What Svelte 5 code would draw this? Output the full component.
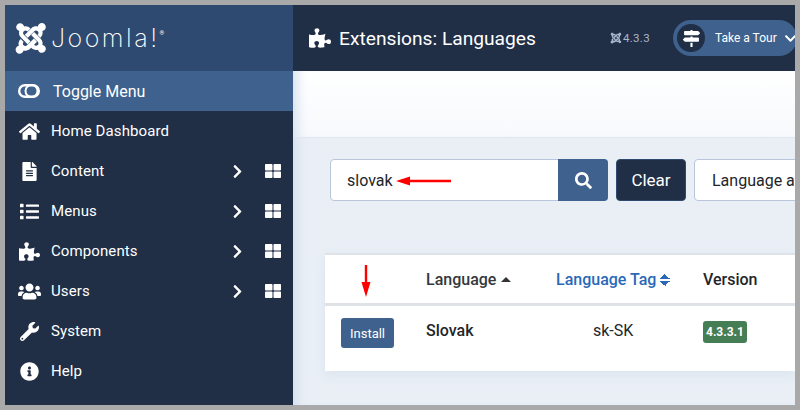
<script>
  const icons = {
    home: ["0 0 576 512", "M280.37 148.26L96 300.11V464a16 16 0 0 0 16 16l112.06-.29a16 16 0 0 0 15.92-16V368a16 16 0 0 1 16-16h64a16 16 0 0 1 16 16v95.64a16 16 0 0 0 16 16.05L464 480a16 16 0 0 0 16-16V300L295.67 148.26a12.19 12.19 0 0 0-15.3 0zM571.6 251.47L488 182.56V44.05a12 12 0 0 0-12-12h-56a12 12 0 0 0-12 12v72.61L318.47 43a48 48 0 0 0-61 0L4.34 251.47a12 12 0 0 0-1.6 16.9l25.5 31A12 12 0 0 0 45.15 301l235.22-193.74a12.19 12.19 0 0 1 15.3 0L530.9 301a12 12 0 0 0 16.9-1.6l25.5-31a12 12 0 0 0-1.7-16.93z"],
    file: ["0 0 384 512", "M224 136V0H24C10.7 0 0 10.7 0 24v464c0 13.3 10.7 24 24 24h336c13.3 0 24-10.7 24-24V160H248c-13.2 0-24-10.8-24-24zm64 236c0 6.6-5.4 12-12 12H108c-6.6 0-12-5.4-12-12v-8c0-6.6 5.4-12 12-12h168c6.6 0 12 5.4 12 12v8zm0-64c0 6.6-5.4 12-12 12H108c-6.6 0-12-5.4-12-12v-8c0-6.6 5.4-12 12-12h168c6.6 0 12 5.4 12 12v8zm0-72v8c0 6.6-5.4 12-12 12H108c-6.6 0-12-5.4-12-12v-8c0-6.6 5.4-12 12-12h168c6.6 0 12 5.4 12 12zm96-114.1v6.1H256V0h6.1c6.4 0 12.5 2.5 17 7l97.9 98c4.5 4.5 7 10.6 7 16.9z"],
    list: ["0 0 512 512", "M80 368H16a16 16 0 0 0-16 16v64a16 16 0 0 0 16 16h64a16 16 0 0 0 16-16v-64a16 16 0 0 0-16-16zm0-320H16A16 16 0 0 0 0 64v64a16 16 0 0 0 16 16h64a16 16 0 0 0 16-16V64a16 16 0 0 0-16-16zm0 160H16a16 16 0 0 0-16 16v64a16 16 0 0 0 16 16h64a16 16 0 0 0 16-16v-64a16 16 0 0 0-16-16zm416 176H176a16 16 0 0 0-16 16v32a16 16 0 0 0 16 16h320a16 16 0 0 0 16-16v-32a16 16 0 0 0-16-16zm0-320H176a16 16 0 0 0-16 16v32a16 16 0 0 0 16 16h320a16 16 0 0 0 16-16V80a16 16 0 0 0-16-16zm0 160H176a16 16 0 0 0-16 16v32a16 16 0 0 0 16 16h320a16 16 0 0 0 16-16v-32a16 16 0 0 0-16-16z"],
    puzzle: ["0 0 576 512", "M519.442 288.651c-41.519 0-59.5 31.593-82.058 31.593C377.409 320.244 432 144 432 144s-196.288 80-196.288-3.297c0-35.827 36.288-46.25 36.288-85.985C272 19.216 243.885 0 210.539 0c-34.654 0-66.366 18.891-66.366 56.346 0 41.364 31.711 59.277 31.711 81.75C175.885 207.719 0 166.758 0 166.758v333.237s178.635 41.047 178.635-28.662c0-22.473-40-40.107-40-81.471 0-37.456 29.25-56.346 63.577-56.346 33.673 0 61.788 19.216 61.788 54.717 0 39.735-36.288 50.158-36.288 85.985 0 60.803 129.675 25.73 181.23 25.73 0 0-34.725-120.101 25.827-120.101 35.962 0 46.423 36.152 86.308 36.152C556.712 416 576 387.99 576 354.443c0-34.199-18.962-65.792-56.558-65.792z"],
    users: ["0 0 640 512", "M96 224c35.3 0 64-28.7 64-64s-28.7-64-64-64-64 28.7-64 64 28.7 64 64 64zm448 0c35.3 0 64-28.7 64-64s-28.7-64-64-64-64 28.7-64 64 28.7 64 64 64zm32 32h-64c-17.6 0-33.5 7.1-45.1 18.6 40.3 22.1 68.9 62 75.1 109.4h66c17.7 0 32-14.3 32-32v-32c0-35.3-28.7-64-64-64zm-256 0c61.9 0 112-50.1 112-112S381.9 32 320 32 208 82.1 208 144s50.1 112 112 112zm76.8 32h-8.3c-20.8 10-43.9 16-68.5 16s-47.6-6-68.5-16h-8.3C179.6 288 128 339.6 128 403.2V432c0 26.5 21.5 48 48 48h288c26.5 0 48-21.5 48-48v-28.8c0-63.6-51.6-115.2-115.2-115.2zm-223.7-13.4C161.5 263.1 145.6 256 128 256H64c-35.3 0-64 28.7-64 64v32c0 17.7 14.3 32 32 32h65.9c6.3-47.4 34.9-87.3 75.2-109.4z"],
    wrench: ["0 0 512 512", "M507.73 109.1c-2.24-9.03-13.54-12.09-20.12-5.51l-74.36 74.36-67.88-11.31-11.31-67.88 74.36-74.36c6.62-6.62 3.43-17.9-5.66-20.16-47.38-11.74-99.55.91-136.58 37.93-39.64 39.64-50.55 97.1-34.05 147.2L18.74 402.76c-24.99 24.99-24.99 65.51 0 90.5 24.99 24.99 65.51 24.99 90.5 0l213.21-213.21c50.12 16.71 107.47 5.68 147.37-34.22 37.07-37.07 49.7-89.32 37.91-136.73zM64 472c-13.25 0-24-10.75-24-24 0-13.26 10.75-24 24-24s24 10.74 24 24c0 13.25-10.75 24-24 24z"],
    info: ["0 0 512 512", "M256 8C119.043 8 8 119.083 8 256c0 136.997 111.043 248 248 248s248-111.003 248-248C504 119.083 392.957 8 256 8zm0 110c23.196 0 42 18.804 42 42s-18.804 42-42 42-42-18.804-42-42 18.804-42 42-42zm56 254c0 6.627-5.373 12-12 12h-88c-6.627 0-12-5.373-12-12v-24c0-6.627 5.373-12 12-12h12v-64h-12c-6.627 0-12-5.373-12-12v-24c0-6.627 5.373-12 12-12h64c6.627 0 12 5.373 12 12v100h12c6.627 0 12 5.373 12 12v24z"],
    chevron: ["0 0 320 512", "M285.476 272.971L91.132 467.314c-9.373 9.373-24.569 9.373-33.941 0l-22.667-22.667c-9.357-9.357-9.375-24.522-.04-33.901L188.505 256 34.484 101.255c-9.335-9.379-9.317-24.544.04-33.901l22.667-22.667c9.373-9.373 24.569-9.373 33.941 0L285.475 239.03c9.373 9.372 9.373 24.568.001 33.941z"],
    grid: ["0 0 512 512", "M296 32h192c13.255 0 24 10.745 24 24v160c0 13.255-10.745 24-24 24H296c-13.255 0-24-10.745-24-24V56c0-13.255 10.745-24 24-24zm-80 0H24C10.745 32 0 42.745 0 56v160c0 13.255 10.745 24 24 24h192c13.255 0 24-10.745 24-24V56c0-13.255-10.745-24-24-24zM0 296v160c0 13.255 10.745 24 24 24h192c13.255 0 24-10.745 24-24V296c0-13.255-10.745-24-24-24H24c-13.255 0-24 10.745-24 24zm296 184h192c13.255 0 24-10.745 24-24V296c0-13.255-10.745-24-24-24H296c-13.255 0-24 10.745-24 24v160c0 13.255 10.745 24 24 24z"],
    search: ["0 0 512 512", "M505 442.7L405.3 343c-4.5-4.5-10.6-7-17-7H372c27.6-35.3 44-79.7 44-128C416 93.1 322.9 0 208 0S0 93.1 0 208s93.1 208 208 208c48.3 0 92.7-16.4 128-44v16.3c0 6.4 2.5 12.5 7 17l99.7 99.7c9.4 9.4 24.6 9.4 33.9 0l28.3-28.3c9.4-9.4 9.4-24.6.1-34zM208 336c-70.7 0-128-57.2-128-128 0-70.7 57.2-128 128-128 70.7 0 128 57.2 128 128 0 70.7-57.2 128-128 128z"],
    signs: ["0 0 512 512", "M507.31 84.69L464 41.37c-6-6-14.14-9.37-22.63-9.37H288V16c0-8.84-7.16-16-16-16h-32c-8.84 0-16 7.16-16 16v16H56c-13.25 0-24 10.75-24 24v80c0 13.25 10.75 24 24 24h385.37c8.49 0 16.62-3.37 22.63-9.37l43.31-43.31c6.25-6.26 6.25-16.38 0-22.63zM224 496c0 8.84 7.16 16 16 16h32c8.84 0 16-7.16 16-16V384h-64v112zm232-272H288v-32h-64v32H70.63c-8.49 0-16.62 3.37-22.63 9.37L4.69 276.69c-6.25 6.25-6.25 16.38 0 22.63L48 342.63c6 6 14.14 9.37 22.63 9.37H456c13.25 0 24-10.75 24-24v-80c0-13.25-10.75-24-24-24z"],
    down: ["0 0 448 512", "M207.029 381.476L12.686 187.132c-9.373-9.373-9.373-24.569 0-33.941l22.667-22.667c9.357-9.357 24.522-9.375 33.901-.04L224 284.505l154.745-154.021c9.379-9.335 24.544-9.317 33.901.04l22.667 22.667c9.373 9.373 9.373 24.569 0 33.941L240.971 381.476c-9.373 9.372-24.569 9.372-33.942 0z"],
    joomla: ["0 0 448 512", "M.6 92.1C.6 58.8 27.4 32 60.4 32c30 0 54.5 21.9 59.2 50.2 32.6-7.6 67.1.6 96.5 30l-44.3 44.3c-20.5-20.5-42.6-16.3-55.4-3.5-14.3 14.3-14.3 37.9 0 52.2l99.5 99.5-44 44.3c-87.7-87.2-49.7-49.7-99.8-99.7-26.8-26.5-35-64.8-24.8-98.9C20.4 144.6.6 120.7.6 92.1zm129.5 116.4l44.3 44.3c10-10 89.7-89.7 99.7-99.8 14.3-14.3 37.6-14.3 51.9 0 12.8 12.8 17 35-3.5 55.4l44 44.3c31.2-31.2 38.5-67.6 28.9-101.2 29.2-4.1 51.9-29.2 51.9-59.5 0-33.2-26.8-60.1-59.8-60.1-30.3 0-55.4 22.5-59.5 51.6-33.8-9.9-71.7-1.5-98.3 25.1-18.3 19.1-71.1 71.5-99.6 99.9zm266.3 152.2c8.2-32.7-.9-68.5-26.3-93.9-11.8-12.2 5 4.7-99.5-99.7l-44.3 44.3 99.7 99.7c14.3 14.3 14.3 37.6 0 51.9-12.8 12.8-35 17-55.4-3.5l-44 44.3c27.6 30.2 68 38.8 102.7 28 5.5 27.4 29.7 48 58.9 48 33 0 59.8-26.8 59.8-60.1 0-30.2-22.5-55-51.6-59zm-84.3-53.1l-44-44.3c-87.2 87.2-49.7 49.7-99.8 99.7-20.5 20.5-42.6 16.3-55.4 3.5-14.3-14.3-14.3-37.6 0-51.9l-44.3-44.3c-30.2 30.2-38.8 68-28 102.7-29 5.5-48 30.7-48 58.9 0 33 26.8 59.8 60.1 59.8 28.2 0 53.4-19 58.9-48 34.7 10.8 74.5 2.2 102.7-28 18.3-19.1 71.1-71.5 97.8-98.1z"]
  };

  const menu = [
    { label: "Home Dashboard", icon: "home", w: 21 },
    { label: "Content", icon: "file", w: 19, more: true },
    { label: "Menus", icon: "list", w: 19, more: true },
    { label: "Components", icon: "puzzle", w: 21, more: true },
    { label: "Users", icon: "users", w: 23, more: true },
    { label: "System", icon: "wrench", w: 19 },
    { label: "Help", icon: "info", w: 19 }
  ];
</script>

{#snippet icon(name, size)}
  <svg class="ico" viewBox={icons[name][0]} width={size} height={size} fill="currentColor"><path d={icons[name][1]} /></svg>
{/snippet}

<div class="frame">
  <aside class="sidebar">
    <div class="logo">
      {@render icon("joomla", 34)}
      <span class="wordmark">Joomla!</span><span class="reg">®</span>
    </div>
    <div class="toggle">
      <span class="slot">
        <svg width="22" height="14" viewBox="0 0 22 14" fill="none" stroke="#fff">
          <rect x="1.2" y="1.2" width="19.6" height="11.6" rx="5.8" stroke-width="2.4" />
          <circle cx="13.5" cy="7" r="6" stroke-width="2" />
        </svg>
      </span>
      <span class="toggle-text">Toggle Menu</span>
    </div>
    <nav>
      {#each menu as item}
        <div class="item">
          <span class="slot">{@render icon(item.icon, item.w)}</span>
          <span class="label">{item.label}</span>
          {#if item.more}
            <span class="chev">{@render icon("chevron", 15)}</span>
            <span class="quick">{@render icon("grid", 16)}</span>
          {/if}
        </div>
      {/each}
    </nav>
  </aside>

  <main class="main">
    <header class="topbar">
      <span class="puzzle">{@render icon("puzzle", 22)}</span>
      <h1>Extensions: Languages</h1>
      <span class="version">{@render icon("joomla", 12)} 4.3.3</span>
      <div class="tour">
        <span class="tour-ico">{@render icon("signs", 17)}</span>
        <span class="tour-text">Take a Tour</span>
        <span class="tour-down">{@render icon("down", 13)}</span>
      </div>
    </header>
    <div class="toolbar"></div>
    <div class="content">
      <div class="filters">
        <div class="search">
          <span class="query">slovak</span>
          <svg class="note-left" width="56" height="10" viewBox="0 0 56 10"><path d="M0 5L14 0.5V3.8H55V6.2H14V9.5Z" fill="#f00" /></svg>
          <button class="search-btn">{@render icon("search", 17)}</button>
        </div>
        <button class="clear">Clear</button>
        <div class="select">Language and more</div>
      </div>

      <table>
        <thead>
          <tr>
            <th class="c-action">
              <svg class="note-down" width="10" height="32" viewBox="0 0 10 32"><path d="M3.8 0H6.2V17H9.5L5 32L0.5 17H3.8Z" fill="#f00" /></svg>
            </th>
            <th class="c-lang">Language <i class="caret"></i></th>
            <th class="c-tag"><span class="sort">Language Tag</span> <i class="updown"></i></th>
            <th class="c-ver">Version</th>
          </tr>
        </thead>
        <tbody>
          <tr>
            <td class="c-action"><button class="install">Install</button></td>
            <td class="c-lang name">Slovak</td>
            <td class="c-tag code">sk-SK</td>
            <td class="c-ver"><span class="badge">4.3.3.1</span></td>
          </tr>
        </tbody>
      </table>
    </div>
  </main>
</div>

<style>
  :global(body) {
    margin: 0;
    overflow: hidden;
  }
  .frame {
    box-sizing: border-box;
    width: 800px;
    height: 410px;
    border: 5px solid #a9a9a9;
    display: grid;
    grid-template-columns: 288px 502px;
    overflow: hidden;
    font-family: Roboto, "Liberation Sans", sans-serif;
    color: #22262a;
  }
  .ico {
    display: block;
  }

  .sidebar {
    background: #202e46;
    color: #fff;
    display: flex;
    flex-direction: column;
  }
  .logo {
    height: 66px;
    background: #2e4a70;
    display: flex;
    align-items: center;
    padding-left: 9px;
  }
  .wordmark {
    font-family: Inter, sans-serif;
    font-weight: 200;
    font-size: 25px;
    letter-spacing: 2.5px;
    margin-left: 3px;
    line-height: 1;
  }
  .reg {
    font-size: 6px;
    align-self: flex-start;
    margin-top: 24px;
  }
  .toggle {
    height: 40px;
    background: #3e618e;
    display: flex;
    align-items: center;
    font-size: 16px;
  }
  .toggle-text {
    margin-left: 2px;
  }
  .slot {
    width: 46px;
    display: flex;
    justify-content: center;
    flex: none;
    padding-left: 2px;
    box-sizing: border-box;
  }
  .item {
    height: 40px;
    display: flex;
    align-items: center;
    font-size: 15px;
    letter-spacing: 0.1px;
  }
  .label {
    flex: 1;
  }
  .chev {
    width: 17px;
    margin-right: 19px;
    display: flex;
    justify-content: center;
  }
  .quick {
    width: 16px;
    margin-right: 12px;
  }

  .main {
    display: flex;
    flex-direction: column;
    min-width: 0;
    background: #e9eff5;
    box-shadow: inset 12px 0 12px -8px #d3dfee;
  }
  .topbar {
    height: 66px;
    flex: none;
    background: #202e46;
    color: #fff;
    display: flex;
    align-items: center;
    padding-left: 16px;
    white-space: nowrap;
  }
  .puzzle {
    flex: none;
  }
  h1 {
    font-size: 19.2px;
    font-weight: 400;
    margin: 0 0 0 8px;
    width: 269px;
    flex: none;
  }
  .version {
    display: flex;
    flex: none;
    align-items: center;
    gap: 1px;
    font-size: 11.5px;
    color: #a9b7cc;
    letter-spacing: 0.3px;
    margin-left: 2px;
    width: 63px;
  }
  .tour {
    width: 124px;
    height: 36px;
    flex: none;
    background: #3e618e;
    border-radius: 18px;
    display: flex;
    align-items: center;
    padding-left: 4px;
    box-sizing: border-box;
  }
  .tour-ico {
    width: 28px;
    height: 28px;
    border-radius: 50%;
    background: #202e46;
    display: flex;
    align-items: center;
    justify-content: center;
    flex: none;
  }
  .tour-text {
    font-size: 12px;
    margin-left: 10px;
  }
  .tour-down {
    margin-left: 7px;
  }

  .toolbar {
    height: 67px;
    flex: none;
    background: linear-gradient(#fff, #f7f9fc);
    border-bottom: 1px solid #dfe6ee;
    box-sizing: border-box;
    box-shadow: inset 12px 0 12px -8px #d3dfee;
  }
  .content {
    padding: 21px 0 0 37px;
    min-width: 0;
  }
  .filters {
    display: flex;
    gap: 8px;
    height: 42px;
    white-space: nowrap;
  }
  .search {
    position: relative;
    width: 278px;
    flex: none;
    display: flex;
    align-items: center;
    box-sizing: border-box;
    background: #fff;
    border: 1px solid #b9c6db;
    border-radius: 4px;
    font-size: 16px;
    padding-left: 16px;
  }
  .query {
    flex: 1;
  }
  .note-left {
    position: absolute;
    left: 65px;
    top: 16px;
  }
  .search-btn {
    width: 50px;
    height: 42px;
    margin: -1px;
    border: 0;
    border-radius: 0 4px 4px 0;
    background: #3e618e;
    color: #fff;
    display: flex;
    align-items: center;
    justify-content: center;
    padding: 0;
  }
  .clear {
    width: 70px;
    flex: none;
    height: 42px;
    padding: 0;
    border: 1px solid #2e4a70;
    border-radius: 4px;
    background: #202e46;
    color: #fff;
    font: 17px Roboto, sans-serif;
  }
  .select {
    box-sizing: border-box;
    width: 200px;
    flex: none;
    background: #fff;
    border: 1px solid #b9c6db;
    border-radius: 4px;
    font-size: 16px;
    line-height: 42px;
    padding-left: 17px;
  }

  table {
    width: 470px;
    margin: 52px 0 0 -5px;
    border-collapse: collapse;
    table-layout: fixed;
    background: #fff;
    box-shadow: 0 4px 10px #dbe3ee;
    border-top: 2px solid #dfe3e8;
    font-size: 16px;
  }
  th {
    height: 48px;
    padding: 0;
    text-align: left;
    font-weight: 500;
    border-bottom: 3px solid #dfe3e8;
    white-space: nowrap;
  }
  td {
    height: 66px;
    padding: 0 0 15px;
    box-sizing: border-box;
  }
  .c-action {
    width: 101px;
    position: relative;
  }
  .c-lang {
    width: 130px;
    color: #33383d;
  }
  .c-tag {
    width: 147px;
  }
  .note-down {
    position: absolute;
    left: 36px;
    top: 10px;
  }
  .caret {
    display: inline-block;
    vertical-align: 3px;
    border: 5px solid transparent;
    border-top: 0;
    border-bottom: 5px solid #333;
    margin-left: 1px;
  }
  .sort {
    color: #2a69b8;
  }
  .updown {
    display: inline-block;
    position: relative;
    width: 10px;
    height: 12px;
    vertical-align: -1px;
    background:
      linear-gradient(to bottom right, transparent 50%, #2a69b8 50%) 0 0 / 5px 5px no-repeat,
      linear-gradient(to bottom left, transparent 50%, #2a69b8 50%) 5px 0 / 5px 5px no-repeat,
      linear-gradient(to top right, transparent 50%, #2a69b8 50%) 0 7px / 5px 5px no-repeat,
      linear-gradient(to top left, transparent 50%, #2a69b8 50%) 5px 7px / 5px 5px no-repeat;
  }
  .install {
    display: block;
    width: 53px;
    height: 30px;
    margin: 5px 0 0 16px;
    padding: 0;
    border: 0;
    border-radius: 3px;
    background: #3e618e;
    color: #fff;
    font: 13px Roboto, sans-serif;
  }
  .name {
    font-weight: 500;
    color: #22262a;
  }
  .code {
    padding-left: 37px;
  }
  .badge {
    display: inline-block;
    background: #457d54;
    color: #fff;
    font-size: 12px;
    font-weight: 700;
    line-height: 22px;
    padding: 0 3px;
    border-radius: 3px;
    margin-top: 3px;
  }
</style>
